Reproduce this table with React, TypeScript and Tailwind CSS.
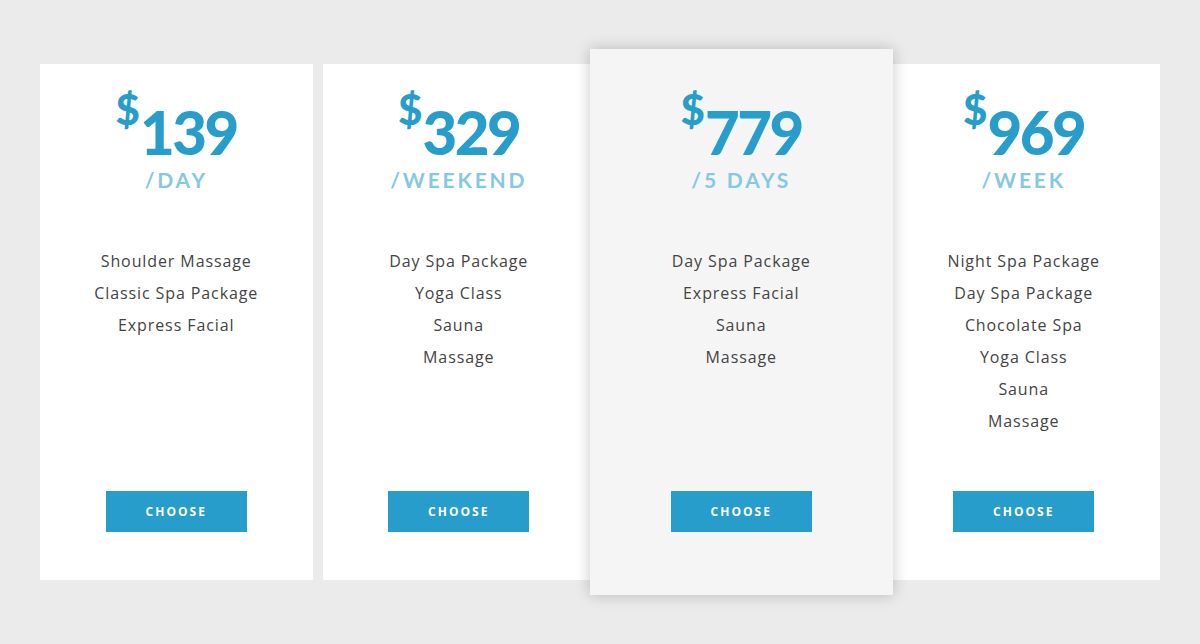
const PLANS = [
  { price: "139", period: "/day", items: ["Shoulder Massage", "Classic Spa Package", "Express Facial"] },
  { price: "329", period: "/weekend", items: ["Day Spa Package", "Yoga Class", "Sauna", "Massage"] },
  { price: "779", period: "/5 days", items: ["Day Spa Package", "Express Facial", "Sauna", "Massage"], featured: true },
  { price: "969", period: "/week", items: ["Night Spa Package", "Day Spa Package", "Chocolate Spa", "Yoga Class", "Sauna", "Massage"] },
];

type Plan = (typeof PLANS)[number] & { featured?: boolean };

export default function App() {
  return (
    <main className="min-h-[644px] w-[1200px] bg-[#ebebeb] px-10 pt-16">
      <div className="flex h-[516px] gap-[10px]">
        {PLANS.map((p) => (
          <div key={p.price} className="relative flex flex-1">
            <Card plan={p} />
          </div>
        ))}
      </div>
    </main>
  );
}

function Card({ plan }: { plan: Plan }) {
  const featured = plan.featured;
  return (
    <div
      className={
        featured
          ? "relative z-10 -m-[15px] flex flex-1 flex-col items-center bg-[#f5f5f5] p-[15px] shadow-[0_0_14px_rgba(0,0,0,0.22)]"
          : "flex flex-1 flex-col items-center bg-white"
      }
    >
      <div className="flex flex-1 flex-col items-center pb-12 pt-[24px]">
        <div className="flex items-start font-['Lato',sans-serif] font-black text-[#279dcb]">
          <span className="text-[42px] leading-none">$</span>
          <span className="mt-[14px] text-[60px] leading-none tracking-[-2.5px]">{plan.price}</span>
        </div>
        <div className="mt-[7px] font-['Lato',sans-serif] text-[21px] font-bold uppercase leading-none tracking-[2.8px] text-[#86c8e2]">
          {plan.period}
        </div>
        <ul className="mt-[55px] text-center font-['Open_Sans',sans-serif] text-[16px] leading-[32px] tracking-[0.9px] text-[#444]">
          {plan.items.map((it) => (
            <li key={it}>{it}</li>
          ))}
        </ul>
        <button className="mt-auto h-[41px] w-[141px] bg-[#279dcb] font-['Open_Sans',sans-serif] text-[12px] font-bold uppercase tracking-[2px] text-white">
          Choose
        </button>
      </div>
    </div>
  );
}
